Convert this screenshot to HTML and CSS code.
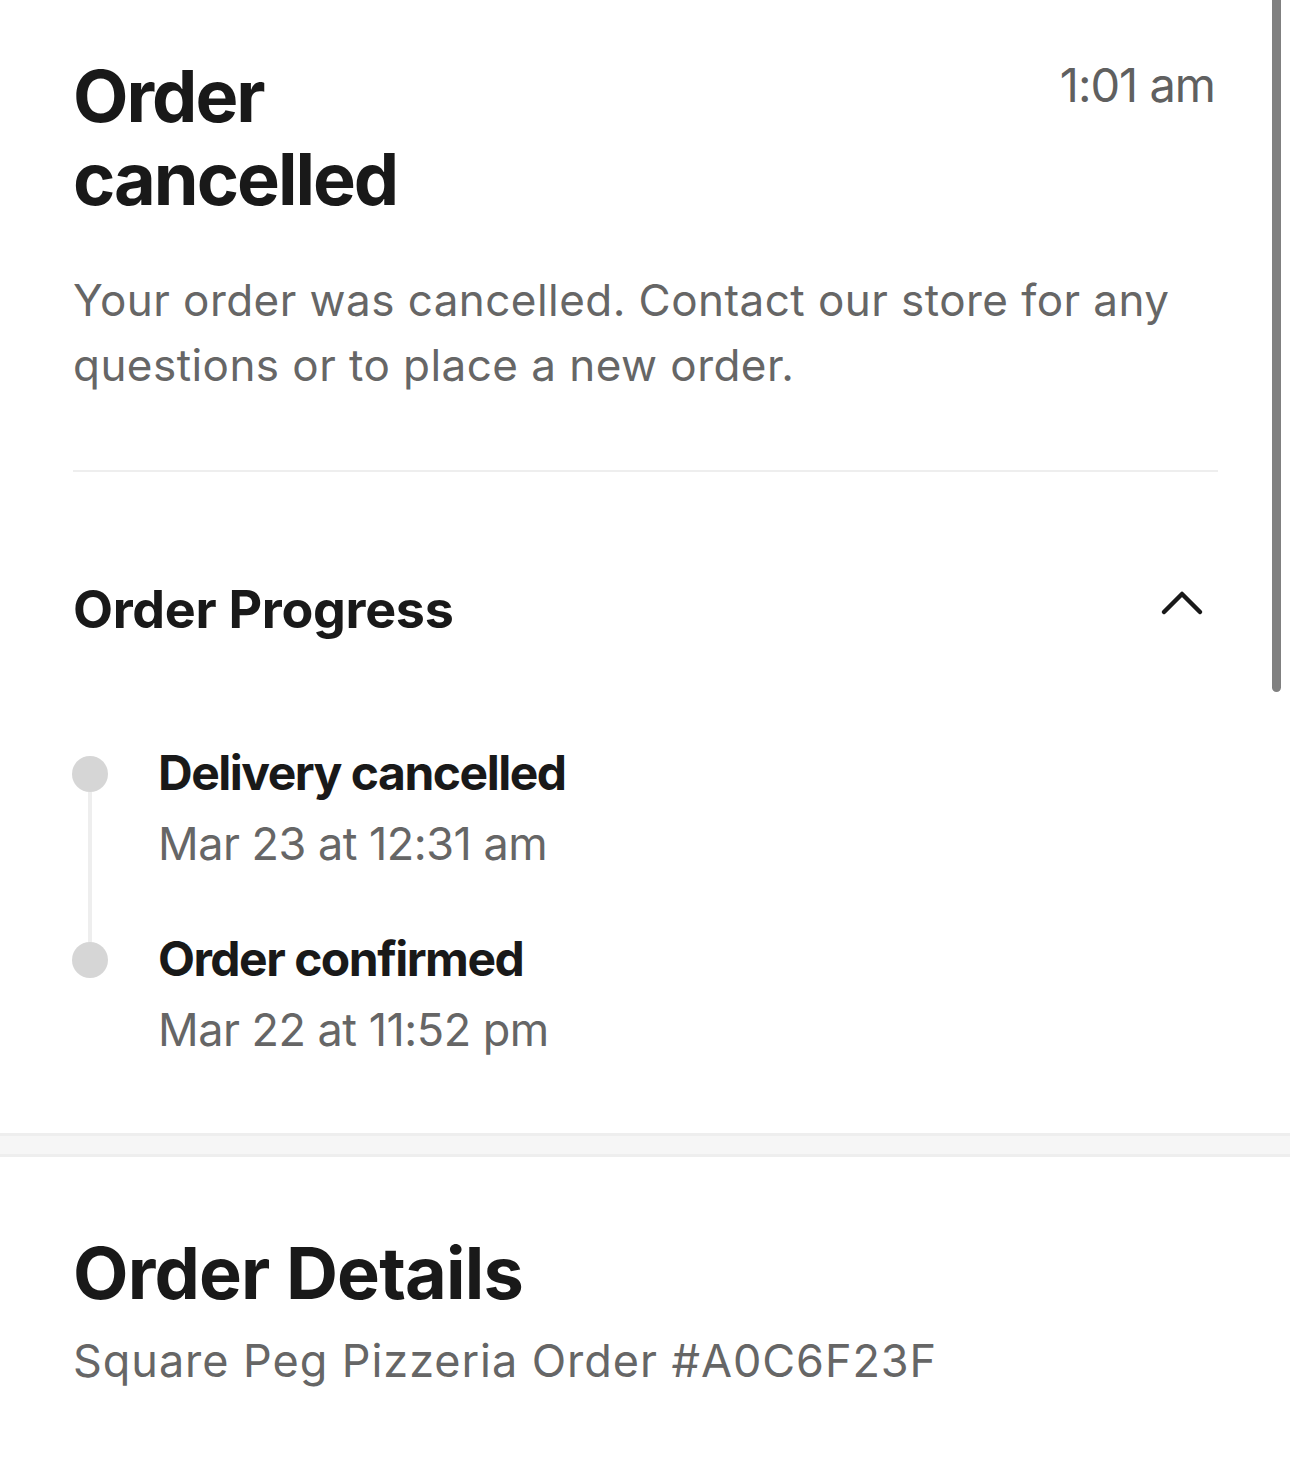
FILE: index.html
```html
<!DOCTYPE html>
<html lang="en">
<head>
    <meta charset="UTF-8">
    <meta name="viewport" content="width=device-width, initial-scale=1.0">
    <title>Order cancelled</title>
    <link rel="stylesheet" href="styles.css">
</head>
<body>
    <div class="scrollbar"></div>

    <section class="status">
        <div class="status-head">
            <h1 class="status-title">Order<br>cancelled</h1>
            <span class="status-time">1:01 am</span>
        </div>
        <p class="status-text">
            Your order was cancelled. Contact our store for any
            questions or to place a new order.
        </p>
        <hr class="divider">

        <!-- Progresso do pedido -->
        <div class="progress-head">
            <h2 class="progress-title">Order Progress</h2>
            <svg class="chevron" width="44" height="28" viewBox="0 0 44 28">
                <path d="M4 24 L22 6 L40 24" fill="none" stroke="#191919" stroke-width="4.5" stroke-linecap="round" stroke-linejoin="round"/>
            </svg>
        </div>

        <ul class="timeline">
            <li class="step">
                <span class="dot"></span>
                <div class="step-body">
                    <div class="step-title">Delivery cancelled</div>
                    <div class="step-date">Mar 23 at 12:31 am</div>
                </div>
            </li>
            <li class="step">
                <span class="dot"></span>
                <div class="step-body">
                    <div class="step-title">Order confirmed</div>
                    <div class="step-date">Mar 22 at 11:52 pm</div>
                </div>
            </li>
        </ul>
    </section>

    <div class="band"></div>

    <section class="details">
        <h2 class="details-title">Order Details</h2>
        <p class="details-sub">Square Peg Pizzeria Order #A0C6F23F</p>
    </section>
</body>
</html>
```

FILE: styles.css
```css
body {
    margin: 0;
    background-color: #ffffff;
    font-family: 'Inter', 'Noto Sans', sans-serif;
    color: #191919;
    position: relative;
}

.scrollbar {
    position: absolute;
    top: 0;
    right: 9px;
    width: 9px;
    height: 692px;
    background-color: #808080;
    border-radius: 0 0 5px 5px;
}

.status {
    padding: 54px 72px 0 73px;
}

.status-head {
    display: flex;
    justify-content: space-between;
    align-items: flex-start;
}

.status-title {
    margin: 0;
    font-size: 72px;
    line-height: 83px;
    font-weight: 700;
    letter-spacing: -2px;
}

.status-time {
    margin-top: 3px;
    margin-right: 3px;
    font-size: 47px;
    line-height: 56px;
    color: #606060;
    letter-spacing: -1px;
}

.status-text {
    margin: 48px 0 0;
    font-size: 44px;
    line-height: 65px;
    color: #666666;
    letter-spacing: 0.45px;
}

.divider {
    margin: 72px 0 0;
    border: none;
    height: 2px;
    background-color: #eeeeee;
}

.progress-head {
    margin-top: 106px;
    display: flex;
    justify-content: space-between;
    align-items: flex-start;
}

.progress-title {
    margin: 0;
    font-size: 52px;
    line-height: 64px;
    font-weight: 700;
    letter-spacing: -0.3px;
}

.chevron {
    margin-top: 10px;
    margin-right: 14px;
}

.timeline {
    list-style: none;
    margin: 101px 0 0 -1px;
    padding: 0;
}

.step {
    position: relative;
    display: flex;
    gap: 50px;
    padding-bottom: 55px;
}

.step:last-child {
    padding-bottom: 0;
}

.step:not(:last-child)::after {
    content: '';
    position: absolute;
    left: 16px;
    top: 31px;
    width: 4px;
    height: 186px;
    background-color: #eeeeee;
}

.dot {
    position: relative;
    z-index: 1;
    flex: none;
    width: 36px;
    height: 36px;
    margin-top: 13px;
    border-radius: 50%;
    background-color: #d6d6d6;
}

.step-title {
    font-size: 48px;
    line-height: 60px;
    font-weight: 700;
    letter-spacing: -1.5px;
}

.step-date {
    margin-top: 11px;
    font-size: 45px;
    line-height: 60px;
    color: #666666;
    letter-spacing: -0.5px;
}

.band {
    margin-top: 73px;
    height: 18px;
    background-color: #f6f6f6;
    border-top: 3px solid #eeeeee;
    border-bottom: 3px solid #eeeeee;
}

.details {
    padding: 73px 72px 0 73px;
}

.details-title {
    margin: 0;
    font-size: 72px;
    line-height: 86px;
    font-weight: 700;
    letter-spacing: -0.8px;
}

.details-sub {
    margin: 15px 0 0;
    font-size: 45px;
    line-height: 60px;
    color: #666666;
    letter-spacing: 0.95px;
}
```
